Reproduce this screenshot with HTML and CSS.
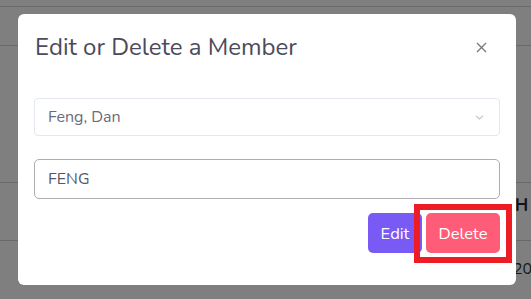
FILE: index.html
```html
<!DOCTYPE html>
<html lang="en">
<head>
    <meta charset="UTF-8">
    <meta name="viewport" content="width=device-width, initial-scale=1.0">
    <title>Members</title>
    <link rel="stylesheet" href="styles.css">
</head>
<body>
    <!-- Page behind the dialog -->
    <div class="page">
        <div class="topbar"></div>
        <div class="row row-head"></div>
        <div class="row row-tall"></div>
        <div class="row row-name"><span class="cell-head">H</span></div>
        <div class="row row-date"><span class="cell-date">20</span></div>
    </div>

    <!-- Edit / delete dialog -->
    <div class="backdrop">
        <div class="modal">
            <div class="modal-header">
                <h2 class="modal-title">Edit or Delete a Member</h2>
                <button class="close-btn" aria-label="Close">
                    <svg width="11" height="11" viewBox="0 0 11 11">
                        <path d="M1 1 L10 10 M10 1 L1 10" stroke="#777" stroke-width="1.3" fill="none"/>
                    </svg>
                </button>
            </div>
            <div class="modal-body">
                <div class="select">
                    <span>Feng, Dan</span>
                    <svg width="9" height="5" viewBox="0 0 9 5">
                        <path d="M1 0.8 L4.5 4 L8 0.8" stroke="#c9cdd8" stroke-width="1.4" fill="none"/>
                    </svg>
                </div>
                <input class="text-input" type="text" value="FENG">
                <div class="actions">
                    <button class="btn btn-edit">Edit</button>
                    <button class="btn btn-delete">Delete<span class="highlight"></span></button>
                </div>
            </div>
        </div>
    </div>
</body>
</html>
```

FILE: styles.css
```css
body {
    margin: 0;
    font-family: 'Nunito', 'Lato', sans-serif;
    background: #fff;
    height: 299px;
    overflow: hidden;
    position: relative;
}

.page {
    height: 299px;
}

.topbar {
    height: 6px;
    border-bottom: 1px solid #d6d6d6;
}

.row {
    border-bottom: 1px solid #d2d2d2;
    display: flex;
    align-items: center;
    justify-content: flex-end;
    font-size: 16px;
}

.row-head { height: 38px; }
.row-tall { height: 136px; }
.row-name { height: 57px; }
.row-date { height: 58px; }

.cell-head {
    width: 16px;
    font-weight: 700;
    color: #1e2b3c;
    font-size: 17px;
    margin-top: -12px;
}

.cell-date {
    width: 18px;
    color: #333;
    font-size: 16px;
    margin-top: -3px;
}

.backdrop {
    position: absolute;
    inset: 0;
    background: rgba(0, 0, 0, 0.5);
    padding: 14px 15px 0 18px;
}

.modal {
    background: #fff;
    border-radius: 6px;
    height: 271px;
    box-sizing: border-box;
}

.modal-header {
    display: flex;
    align-items: center;
    justify-content: space-between;
    padding: 16px 29px 16px 17px;
    height: 34px;
}

.modal-title {
    margin: 0;
    font-size: 24px;
    font-weight: 400;
    color: #4a4b5c;
}

.close-btn {
    background: none;
    border: none;
    padding: 0;
    width: 11px;
    height: 11px;
    display: flex;
}

.modal-body {
    padding: 18px 16px 0 16px;
}

.select {
    height: 38px;
    box-sizing: border-box;
    border: 1px solid #e3e7ee;
    border-radius: 4px;
    display: flex;
    align-items: center;
    justify-content: space-between;
    padding: 0 15px 0 13px;
    font-size: 16px;
    color: #6a6b78;
}

.text-input {
    display: block;
    width: 100%;
    box-sizing: border-box;
    height: 40px;
    margin-top: 23px;
    border: 1px solid #adadad;
    border-radius: 5px;
    padding: 0 13px;
    font-family: inherit;
    font-size: 16px;
    color: #55566a;
    outline: none;
}

.actions {
    display: flex;
    justify-content: flex-end;
    gap: 4px;
    margin-top: 14px;
}

.btn {
    height: 40px;
    border: none;
    border-radius: 5px;
    color: #fff;
    font-family: inherit;
    font-size: 16.5px;
    padding: 0;
}

.btn-edit {
    width: 54px;
    background: #7a5af5;
}

.btn-delete {
    width: 74px;
    background: #ff5d77;
    position: relative;
}

/* red annotation frame drawn over the delete button */
.highlight {
    position: absolute;
    top: -9px;
    left: -12px;
    right: -12px;
    bottom: -10px;
    border: 6px solid #ee1c25;
}
```
